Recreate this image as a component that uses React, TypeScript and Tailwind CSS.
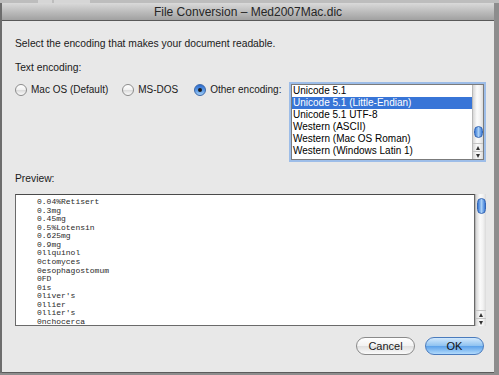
const listItems = [
  "Unicode 5.1",
  "Unicode 5.1 (Little-Endian)",
  "Unicode 5.1 UTF-8",
  "Western (ASCII)",
  "Western (Mac OS Roman)",
  "Western (Windows Latin 1)",
];

const previewLines = [
  "0.04%Retisert",
  "0.3mg",
  "0.45mg",
  "0.5%Lotensin",
  "0.625mg",
  "0.9mg",
  "0llquinol",
  "0ctomyces",
  "0esophagostomum",
  "0FD",
  "0is",
  "0liver's",
  "0llier",
  "0llier's",
  "0nchocerca",
];

const Radio = ({ checked, label }: { checked?: boolean; label: string }) => {
  return (
    <div className="flex items-center gap-[4px]">
      {checked ? (
        <span className="flex h-[12px] w-[12px] items-center justify-center rounded-full border border-[#3a67a8] bg-[linear-gradient(180deg,#2d6ccf,#5d9be6_55%,#a6d0f7)]">
          <span className="h-[4px] w-[4px] rounded-full bg-[#1b1b1b]"></span>
        </span>
      ) : (
        <span className="h-[12px] w-[12px] rounded-full border border-[#8c8c8c] bg-[linear-gradient(180deg,#ffffff,#f0f0f0_50%,#dcdcdc_55%,#fbfbfb)]"></span>
      )}
      <span className="leading-[12px]">{label}</span>
    </div>
  );
};

const ScrollBar = ({ thumbTop, thumbHeight }: { thumbTop: number; thumbHeight: number }) => {
  return (
    <div className="relative h-full w-[11px] border-l border-[#b8b8b8] bg-[linear-gradient(90deg,#d6d6d6,#fbfbfb_40%,#f2f2f2_70%,#dadada)]">
      <div
        className="absolute left-[1px] w-[9px] rounded-full border border-[#3566b4] bg-[linear-gradient(90deg,#3b7ad6,#a9d0f7_50%,#3b7ad6)]"
        style={{ top: thumbTop, height: thumbHeight }}
      ></div>
      <div className="absolute bottom-0 left-0 flex w-full flex-col items-center">
        <div className="flex h-[8px] w-full items-center justify-center border-t border-[#c4c4c4]">
          <span className="h-0 w-0 border-x-[2.5px] border-b-[4px] border-x-transparent border-b-[#333]"></span>
        </div>
        <div className="flex h-[8px] w-full items-center justify-center border-t border-[#c4c4c4]">
          <span className="h-0 w-0 border-x-[2.5px] border-t-[4px] border-x-transparent border-t-[#333]"></span>
        </div>
      </div>
    </div>
  );
};

export default function App() {
  return (
    <div className="h-[375px] w-[499px] overflow-hidden bg-[#8d8d8d] font-['Liberation_Sans',Arial,sans-serif] text-[10px] text-[#1a1a1a]">
      <div className="flex h-[3px] bg-[#bdbdbd]">
        <div className="ml-[38px] w-[14px] bg-[#d6d6d6]"></div>
        <div className="ml-[2px] w-[36px] bg-[#d6d6d6]"></div>
      </div>
      <div className="flex h-[370px] w-[494px] flex-col border-l-2 border-[#6d6d6d]">
        <div className="flex h-[18px] items-center justify-center border-b border-[#595959] bg-[linear-gradient(180deg,#dadada,#bdbdbd_50%,#a1a1a1)] text-[12px] text-[#262626]">
          File Conversion – Med2007Mac.dic
        </div>
        <div className="flex flex-1 flex-col border-b border-[#5c5c5c] bg-[#e8e8e8] pl-[13px] pr-[10px]">
          <div className="mt-[17px] text-[10.3px] leading-[12px]">Select the encoding that makes your document readable.</div>
          <div className="mt-[12px] text-[10.3px] leading-[12px]">Text encoding:</div>

          <div className="mt-[8px] flex items-start">
            <div className="mt-[2px] flex w-[276px] items-center">
              <Radio label="Mac OS (Default)" />
              <div className="ml-[14px]">
                <Radio label="MS-DOS" />
              </div>
              <div className="ml-[16px]">
                <Radio checked label="Other encoding:" />
              </div>
            </div>
            <div className="mt-[2px] flex h-[76px] w-[193px] border border-[#7b7b7b] bg-white shadow-[0_0_0_2px_#9dbde8]">
              <div className="flex-1 overflow-hidden">
                {listItems.map((item, index) => (
                  <div
                    key={item}
                    className={
                      index === 1
                        ? "h-[12px] bg-[#3875d7] pl-[1px] leading-[12px] text-white"
                        : "h-[12px] pl-[1px] leading-[12px] text-black"
                    }
                  >
                    {item}
                  </div>
                ))}
              </div>
              <ScrollBar thumbTop={41} thumbHeight={12} />
            </div>
          </div>

          <div className="mt-[13px] text-[10.3px] leading-[12px]">Preview:</div>

          <div className="mt-[9px] flex h-[132px] w-[471px]">
            <div className="flex-1 overflow-hidden border border-[#6a6a6a] border-t-[#4a4a4a] bg-white pl-[21px] pt-[3px] font-['Liberation_Mono','Courier_New',monospace] text-[8px] leading-[8.57px] text-[#2a2a2a]">
              {previewLines.map((line) => (
                <div key={line}>{line}</div>
              ))}
            </div>
            <div className="h-full">
              <ScrollBar thumbTop={4} thumbHeight={16} />
            </div>
          </div>

          <div className="mt-[11px] flex justify-end gap-[10px]">
            <button className="h-[18px] w-[59px] rounded-full border border-[#8a8a8a] bg-[linear-gradient(180deg,#ffffff,#f2f2f2_50%,#e0e0e0_52%,#fbfbfb)] text-[11px] leading-[16px] text-[#1a1a1a]">
              Cancel
            </button>
            <button className="h-[18px] w-[59px] rounded-full border border-[#4a7bbd] bg-[linear-gradient(180deg,#d3e9fc,#90c3f1_48%,#5da2ea_52%,#b1dafc)] text-[11px] leading-[16px] text-[#111]">
              OK
            </button>
          </div>
        </div>
      </div>
    </div>
  );
}
